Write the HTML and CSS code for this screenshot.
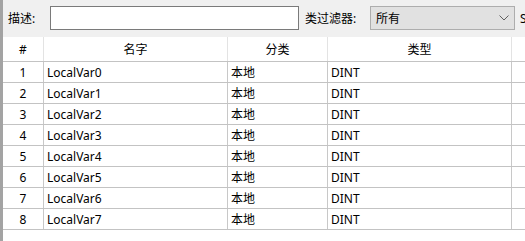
FILE: index.html
```html
<!DOCTYPE html>
<html lang="zh">

<head>
    <meta charset="UTF-8">
    <meta name="viewport" content="width=device-width, initial-scale=1.0">
    <title>局部变量</title>
    <link rel="stylesheet" href="styles.css">
</head>

<body>

    <div id="varPanel">
        <div class="toolbar">
            <label class="desc-label" for="descInput">描述:</label>
            <input type="text" id="descInput" class="desc-input">
            <span class="filter-label">类过滤器:</span>
            <div class="combo">
                <span>所有</span>
                <svg class="chevron" width="10" height="6" viewBox="0 0 10 6">
                    <polyline points="0.5,0.5 5,5 9.5,0.5" fill="none" stroke="#606060" stroke-width="1" />
                </svg>
            </div>
            <span class="cut-label">S</span>
        </div>

        <div class="grid">
            <div class="row head">
                <div class="cell num">#</div>
                <div class="cell">名字</div>
                <div class="cell">分类</div>
                <div class="cell">类型</div>
                <div class="cell"></div>
            </div>
            <div id="rows"></div>
        </div>
    </div>

    <script>
        var rowsBox = document.getElementById("rows");
        for (var i = 0; i < 8; i++) {
            var row = document.createElement("div");
            row.className = "row";
            row.innerHTML =
                '<div class="cell num">' + (i + 1) + '</div>' +
                '<div class="cell">LocalVar' + i + '</div>' +
                '<div class="cell">本地</div>' +
                '<div class="cell">DINT</div>' +
                '<div class="cell"></div>';
            rowsBox.appendChild(row);
        }
    </script>
</body>

</html>
```

FILE: styles.css
```css
body {
    margin: 0;
    font-family: "Noto Sans", "Noto Sans CJK SC", sans-serif;
    font-size: 12px;
    color: #000;
    background: #fff;
    overflow: hidden;
}

#varPanel {
    height: 241px;
    border-left: 3px solid #a3a3a3;
    /* thanh xám bên trái */
    box-sizing: border-box;
}

.toolbar {
    display: flex;
    align-items: center;
    height: 37px;
    padding: 0 0 1px 5px;
    background: #f0f0f0;
    box-sizing: border-box;
    overflow: hidden;
    white-space: nowrap;
}

.desc-label {
    width: 42px;
    flex: none;
}

.desc-input {
    width: 249px;
    height: 24px;
    margin: 0;
    padding: 0 4px;
    border: 1px solid #7a7a7a;
    box-sizing: border-box;
    flex: none;
    background: #fff;
}

.filter-label {
    margin-left: 6px;
    width: 65px;
    flex: none;
}

.combo {
    display: flex;
    align-items: center;
    justify-content: space-between;
    width: 145px;
    height: 24px;
    padding: 0 5px 0 5px;
    border: 1px solid #adadad;
    background: #e1e1e1;
    box-sizing: border-box;
    flex: none;
}

.chevron {
    display: block;
}

.cut-label {
    margin-left: 5px;
    flex: none;
}

.row {
    display: grid;
    grid-template-columns: 41px 184px 100px 184px 1fr;
    height: 21px;
    border-bottom: 1px solid #c3c3c3;
    box-sizing: border-box;
}

.row.head {
    height: 25px;
}

.cell {
    display: flex;
    align-items: center;
    padding-left: 3px;
    border-right: 1px solid #c8c8c8;
    box-sizing: border-box;
    overflow: hidden;
    white-space: nowrap;
}

.cell:last-child {
    border-right: none;
}

.head .cell {
    justify-content: center;
    padding-left: 0;
    border-right-color: #e3e3e3;
}

.cell.num {
    justify-content: center;
    padding-left: 0;
}
```
